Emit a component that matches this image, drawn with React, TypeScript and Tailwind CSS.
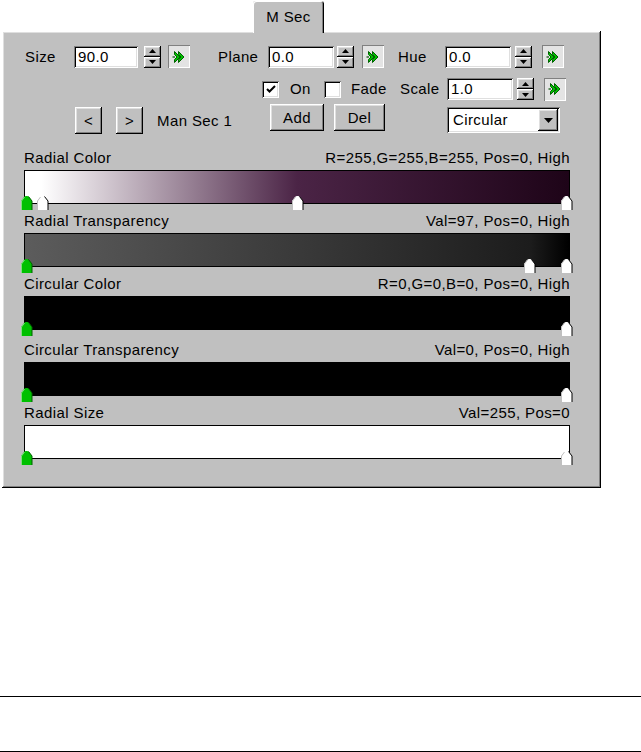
import React from "react";

const raised =
  "bg-[#c0c0c0] shadow-[inset_-1px_-1px_0_#000,inset_1px_1px_0_#fff,inset_-2px_-2px_0_#808080,inset_2px_2px_0_#dfdfdf]";
const sunken =
  "bg-white shadow-[inset_1px_1px_0_#808080,inset_-1px_-1px_0_#fff,inset_2px_2px_0_#000,inset_-2px_-2px_0_#dfdfdf]";

function Field({ value, className }: { value: string; className: string }) {
  return (
    <div className={`flex h-[22px] items-center pl-[4px] ${sunken} ${className}`}>
      {value}
    </div>
  );
}

function Spinner({ className = "" }: { className?: string }) {
  return (
    <div className={`flex h-[22px] w-[17px] flex-col ${className}`}>
      <div className={`flex h-[11px] items-center justify-center ${raised}`}>
        <svg width="7" height="4" viewBox="0 0 7 4">
          <path d="M3.5 0 L7 4 H0 Z" fill="#000" />
        </svg>
      </div>
      <div className={`flex h-[11px] items-center justify-center ${raised}`}>
        <svg width="7" height="4" viewBox="0 0 7 4">
          <path d="M0 0 H7 L3.5 4 Z" fill="#000" />
        </svg>
      </div>
    </div>
  );
}

function GoButton({ className = "" }: { className?: string }) {
  return (
    <div
      className={`flex h-[23px] w-[22px] items-center justify-center bg-[#e3e3e3] shadow-[inset_1px_1px_0_#808080,inset_-1px_-1px_0_#fff] ${className}`}
    >
      <svg width="14" height="14" viewBox="0 0 14 14">
        <path d="M0.5 7 H3" stroke="#005000" strokeWidth="1.2" />
        <path d="M2.5 1.5 L8 7 L2.5 12.5 V9.5 L5 7 L2.5 4.5 Z" fill="#00c000" stroke="#006000" strokeWidth="1" />
        <path d="M6.5 1.5 L12 7 L6.5 12.5 V9.5 L9 7 L6.5 4.5 Z" fill="#00c000" stroke="#006000" strokeWidth="1" />
      </svg>
    </div>
  );
}

function Check({ checked, className = "" }: { checked: boolean; className?: string }) {
  return (
    <div className={`flex h-[17px] w-[17px] items-center justify-center ${sunken} ${className}`}>
      {checked && (
        <svg width="10" height="9" viewBox="0 0 10 9">
          <path d="M1 4 L3.5 6.5 L9 1" stroke="#000" strokeWidth="2" fill="none" />
        </svg>
      )}
    </div>
  );
}

function Marker({ left, green }: { left: number; green?: boolean }) {
  return (
    <svg
      width="13"
      height="15"
      viewBox="0 0 13 15"
      className="absolute top-[24px]"
      style={{ left }}
    >
      <path
        d="M1 15 V6 L4 2 Q5 1 6 1 H7 Q8 1 9 2 L12 6 V15 Z"
        fill={green ? "#00c000" : "#fff"}
      />
      <path d="M1.5 15 V6 L4.5 2" stroke={green ? "#7fe07f" : "#c0c0c0"} fill="none" />
      <path d="M8.5 1.5 L12 6 V15" stroke={green ? "#006000" : "#000"} fill="none" />
    </svg>
  );
}

type Section = {
  label: string;
  info: string;
  bar: string;
  markers: number[];
  mt: string;
};

const sections: Section[] = [
  {
    label: "Radial Color",
    info: "R=255,G=255,B=255, Pos=0, High",
    bar: "bg-[linear-gradient(to_right,#ffffff_0%,#ffffff_3%,#4b2446_50%,#1e0418_100%)]",
    markers: [12, 267, 536],
    mt: "mt-[15px]",
  },
  {
    label: "Radial Transparency",
    info: "Val=97, Pos=0, High",
    bar: "bg-[linear-gradient(to_right,#5c5c5c_0%,#1c1c1c_93%,#000000_100%)]",
    markers: [499, 536],
    mt: "mt-[8px]",
  },
  {
    label: "Circular Color",
    info: "R=0,G=0,B=0, Pos=0, High",
    bar: "bg-black",
    markers: [536],
    mt: "mt-[8px]",
  },
  {
    label: "Circular Transparency",
    info: "Val=0, Pos=0, High",
    bar: "bg-black",
    markers: [536],
    mt: "mt-[11px]",
  },
  {
    label: "Radial Size",
    info: "Val=255, Pos=0",
    bar: "bg-white",
    markers: [536],
    mt: "mt-[8px]",
  },
];

export default function App() {
  return (
    <div className="h-[752px] w-[641px] overflow-hidden bg-white font-['Liberation_Sans',Arial,sans-serif] text-[15px] leading-[18px] tracking-[0.4px] text-black">
      {/* Tab strip */}
      <div className="flex pl-[253px] pt-[1px]">
        <div className="relative z-10 -mb-[2px] flex h-[32px] w-[71px] justify-center rounded-t-[3px] bg-[#c0c0c0] pt-[7px] shadow-[inset_1px_1px_0_#fff,inset_-1px_0_0_#000,inset_-2px_0_0_#808080]">
          M Sec
        </div>
      </div>

      {/* Panel */}
      <div className="ml-[2px] h-[457px] w-[599px] bg-[#c0c0c0] pt-[14px] shadow-[inset_-1px_-1px_0_#000,inset_1px_1px_0_#fff,inset_-2px_-2px_0_#808080,inset_2px_2px_0_#dfdfdf]">
        {/* Row 1 */}
        <div className="ml-[23px] flex h-[23px] items-center">
          <span className="w-[49px]">Size</span>
          <Field value="90.0" className="w-[64px]" />
          <Spinner className="ml-[6px]" />
          <GoButton className="ml-[7px]" />
          <span className="ml-[28px] w-[50px]">Plane</span>
          <Field value="0.0" className="w-[66px]" />
          <Spinner className="ml-[3px]" />
          <GoButton className="ml-[8px]" />
          <span className="ml-[14px] w-[47px]">Hue</span>
          <Field value="0.0" className="w-[66px]" />
          <Spinner className="ml-[4px]" />
          <GoButton className="ml-[10px]" />
        </div>

        {/* Row 2 */}
        <div className="ml-[23px] mt-[10px] flex h-[22px] items-center">
          <Check checked className="ml-[237px]" />
          <span className="ml-[11px] w-[34px]">On</span>
          <Check checked={false} />
          <span className="ml-[10px] w-[49px]">Fade</span>
          <span className="w-[47px]">Scale</span>
          <Field value="1.0" className="w-[66px]" />
          <Spinner className="ml-[4px]" />
          <GoButton className="ml-[10px]" />
        </div>

        {/* Row 3 */}
        <div className="ml-[23px] mt-[4px] flex items-start">
          <button className={`ml-[50px] mt-[3px] flex h-[27px] w-[27px] items-center justify-center ${raised}`}>
            &lt;
          </button>
          <button className={`ml-[14px] mt-[3px] flex h-[27px] w-[27px] items-center justify-center ${raised}`}>
            &gt;
          </button>
          <span className="ml-[14px] mt-[3px] flex h-[27px] w-[113px] items-center">Man Sec 1</span>
          <button className={`flex h-[27px] w-[54px] items-center justify-center ${raised}`}>Add</button>
          <button className={`ml-[10px] flex h-[27px] w-[51px] items-center justify-center ${raised}`}>Del</button>
          <div className={`ml-[62px] mt-[3px] flex h-[26px] w-[113px] items-center justify-between pl-[6px] pr-[2px] ${sunken}`}>
            <span>Circular</span>
            <div className={`flex h-[22px] w-[20px] items-center justify-center ${raised}`}>
              <svg width="9" height="5" viewBox="0 0 9 5">
                <path d="M0 0 H9 L4.5 5 Z" fill="#000" />
              </svg>
            </div>
          </div>
        </div>

        {/* Gradient sections */}
        {sections.map((s) => (
          <div key={s.label} className={`ml-[22px] w-[546px] ${s.mt}`}>
            <div className="flex h-[18px] items-center justify-between">
              <span>{s.label}</span>
              <span>{s.info}</span>
            </div>
            <div className={`relative mt-[3px] h-[34px] border border-black ${s.bar}`}>
              <Marker left={-5} green />
              {s.markers.map((m) => (
                <Marker key={m} left={m - 1} />
              ))}
            </div>
          </div>
        ))}
      </div>

      {/* Bottom rules */}
      <div className="mt-[208px] h-[1px] w-full bg-black" />
      <div className="mt-[54px] h-[1px] w-full bg-black" />
    </div>
  );
}
